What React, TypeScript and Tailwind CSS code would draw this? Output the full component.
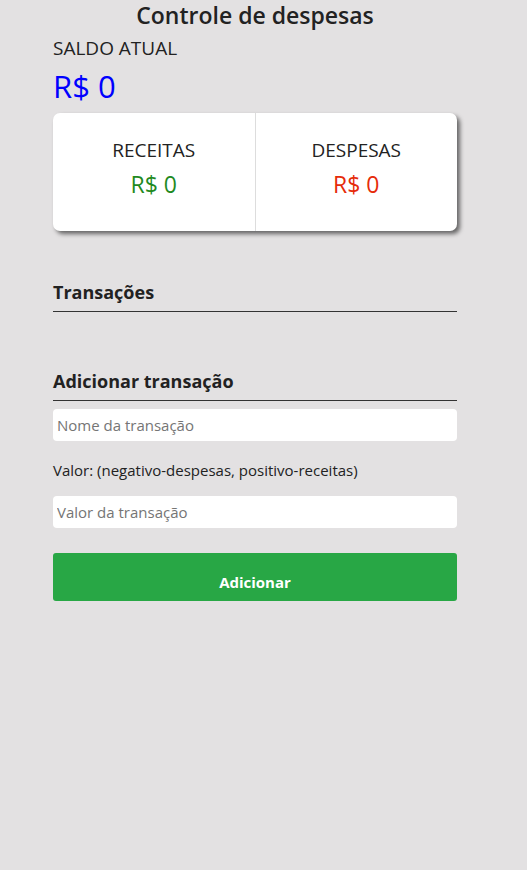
export default function App() {
  const font = { fontFamily: '"Open Sans", "Noto Sans", sans-serif' };
  return (
    <div className="min-h-[870px] bg-[#e3e1e2] text-[#222]" style={font}>
      <div className="ml-[53px] w-[404px] flex flex-col">
        <h1 className="text-center text-[23px] font-semibold leading-[30px] text-[#222]">Controle de despesas</h1>
        <h4 className="mt-[6px] text-[19px] leading-[24px] uppercase">Saldo atual</h4>
        <h1 className="mt-[6px] text-[31px] leading-[40px] text-[#0000ff]">R$ 0</h1>
        <div className="mt-[7px] h-[118px] flex bg-white rounded-[7px] shadow-[3px_3px_4px_rgba(0,0,0,0.55)]">
          <div className="flex-1 flex flex-col items-center justify-center pb-[9px] border-r border-[#dddddd]">
            <h4 className="text-[19px] leading-[24px] uppercase">Receitas</h4>
            <p className="mt-[8px] text-[23px] leading-[28px] text-[#1f8a1f]">R$ 0</p>
          </div>
          <div className="flex-1 flex flex-col items-center justify-center pb-[9px]">
            <h4 className="text-[19px] leading-[24px] uppercase">Despesas</h4>
            <p className="mt-[8px] text-[23px] leading-[28px] text-[#e62b0a]">R$ 0</p>
          </div>
        </div>
        <h3 className="mt-[49px] text-[18px] font-bold leading-[24px] pb-[7px] border-b border-[#333]">Transações</h3>
        <h3 className="mt-[57px] text-[18px] font-bold leading-[24px] pb-[7px] border-b border-[#333]">Adicionar transação</h3>
        <input
          className="mt-[8px] h-[32px] w-full rounded-[4px] bg-white px-[4px] text-[15px] outline-none placeholder:text-[#757575]"
          placeholder="Nome da transação"
          style={font}
        />
        <label className="mt-[18px] text-[15px] leading-[22px] text-[#222]">Valor: (negativo-despesas, positivo-receitas)</label>
        <input
          className="mt-[15px] h-[32px] w-full rounded-[4px] bg-white px-[4px] text-[15px] outline-none placeholder:text-[#757575]"
          placeholder="Valor da transação"
          style={font}
        />
        <button
          className="mt-[25px] h-[48px] w-full rounded-[3px] bg-[#28a745] pt-[10px] text-[15px] font-bold text-white"
          style={font}
        >
          Adicionar
        </button>
      </div>
    </div>
  );
}
